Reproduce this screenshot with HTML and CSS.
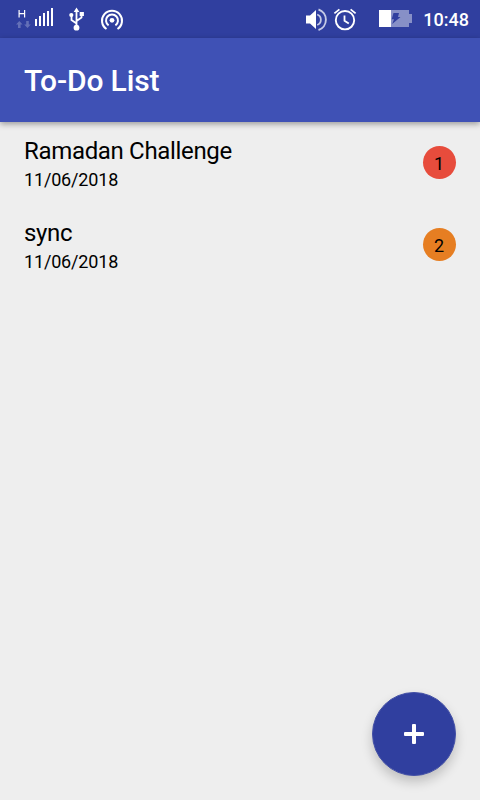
FILE: index.html
```html
<!DOCTYPE html>
<html lang="en">
<head>
<meta charset="utf-8">
<title>To-Do List</title>
<link rel="stylesheet" href="styles.css">
</head>
<body>
<div class="status-bar">
  <div class="status-left">
    <svg class="signal" width="40" height="22" viewBox="0 0 40 22">
      <path class="stroke" stroke-width="1.2" d="M4.1 2v7.4M9.6 2v7.4M4.1 5.6h5.5"/>
      <path class="dim" d="M4.3 13l3.3 3.6H5.6V20H3v-3.4H1zM12.5 20l-3.3-3.6h2V13h2.6v3.4h2z"/>
      <path class="fill" d="M20 11h2v7h-2zM24 8h2v10h-2zM28 5h2v13h-2zM32 3h2v15h-2zM36 0h2v18h-2z"/>
    </svg>
    <svg class="usb" width="18" height="24" viewBox="0 0 18 24">
      <path class="stroke" stroke-width="1.8" d="M8.5 20V4M8.5 16.5l-5-3.5V8M8.5 14l5-3.5V7"/>
      <path class="fill" d="M8.5 .5l2.8 4.5H5.7zM11.7 5h4.2v3.9h-4.2z"/>
      <circle class="fill" cx="3.3" cy="8" r="2.1"/>
      <circle class="fill" cx="8.5" cy="20.7" r="2.9"/>
    </svg>
    <svg class="hotspot" width="24" height="22" viewBox="0 0 24 22">
      <circle class="fill" cx="12" cy="11.3" r="2.4"/>
      <path class="stroke" stroke-width="2" d="M8.6 16.4A6 6 0 1 1 15.4 16.4M6.5 20A10 10 0 1 1 17.5 20"/>
    </svg>
  </div>
  <div class="status-right">
    <svg class="volume" width="22" height="24" viewBox="0 0 22 24">
      <path class="fill" d="M0 7.5h4L10 2v19l-6-5.5H0z"/>
      <path class="stroke soft" stroke-width="1.8" d="M11.2 6.5a5.6 5.6 0 0 1 0 10.5"/>
      <path class="stroke soft" stroke-width="1.9" d="M12.5 1.5a10.8 10.8 0 0 1 0 20.5"/>
    </svg>
    <svg class="alarm" width="24" height="24" viewBox="0 0 24 24">
      <circle class="stroke" stroke-width="1.9" cx="12" cy="12.2" r="9.2"/>
      <path class="stroke" stroke-width="1.8" d="M1.4 5.4l5-4M22.6 5.4l-5-4M11.5 7.5v5.2l4.3 2.8"/>
    </svg>
    <svg class="battery" width="34" height="18" viewBox="0 0 34 18">
      <path class="cell" d="M12 0h18v4h3v9h-3v4H12z"/>
      <path class="fill" d="M0 0h12v17H0z"/>
      <path class="bolt" d="M14.5 3h5.5l-1 4h2.5L13.2 14l1.8-4.8h-2.3z"/>
    </svg>
    <span class="clock">10:48</span>
  </div>
</div>
<header class="app-bar"><h1 class="title">To-Do List</h1></header>
<main class="tasks">
  <div class="task">
    <div class="task-text">
      <div class="task-name">Ramadan Challenge</div>
      <div class="task-date">11/06/2018</div>
    </div>
    <div class="priority high">1</div>
  </div>
  <div class="task">
    <div class="task-text">
      <div class="task-name">sync</div>
      <div class="task-date">11/06/2018</div>
    </div>
    <div class="priority medium">2</div>
  </div>
</main>
<button class="fab" aria-label="Add task">
  <svg width="20" height="20" viewBox="0 0 20 20"><path class="fill" d="M9 0h2q1 0 1 1v7h7q1 0 1 1v2q0 1-1 1h-7v7q0 1-1 1H9q-1 0-1-1v-7H1q-1 0-1-1V9q0-1 1-1h7V1q0-1 1-1z"/></svg>
</button>
</body>
</html>
```
FILE: styles.css
```css
* { box-sizing: border-box; }
body {
  margin: 0;
  height: 800px;
  overflow: hidden;
  background: #eeeeee;
  color: #000;
  font-family: Roboto, "Liberation Sans", sans-serif;
}
.status-bar {
  display: flex;
  justify-content: space-between;
  height: 38px;
  padding: 0 11px 0 15px;
  background: #303f9f;
}
.status-left, .status-right { display: flex; align-items: flex-start; }
.fill { fill: #fff; }
.stroke { fill: none; stroke: #fff; }
.dim { fill: #6470b7; }
.soft { stroke: #c5cae6; }
.cell { fill: #8790c7; }
.bolt { fill: #303f9f; }
.signal { margin-top: 8px; }
.usb { margin: 7px 0 0 13px; }
.hotspot { margin: 9px 0 0 14px; }
.volume { margin-top: 8px; }
.alarm { margin: 8px 0 0 5px; }
.battery { margin: 10px 0 0 22px; }
.clock {
  margin-left: 10px;
  color: #fff;
  font-size: 18px;
  font-weight: 500;
  line-height: 40px;
}
.app-bar {
  display: flex;
  align-items: center;
  height: 84px;
  padding: 2px 24px 0;
  background: #3f51b5;
  box-shadow: 0 2px 6px rgba(0, 0, 0, .36);
}
.title {
  margin: 0;
  color: #fff;
  font-size: 30px;
  font-weight: 500;
  line-height: 36px;
  letter-spacing: -.15px;
}
.task {
  display: flex;
  justify-content: space-between;
  height: 82px;
  padding: 15px 24px 0;
}
.task-name { font-size: 24px; line-height: 28px; letter-spacing: -.33px; }
.task-date { margin-top: 4px; font-size: 18px; line-height: 22px; letter-spacing: -.17px; }
.priority {
  width: 33px;
  height: 33px;
  margin-top: 9px;
  padding-right: 1px;
  border-radius: 50%;
  font-size: 18px;
  line-height: 35px;
  text-align: center;
}
.high { background: #e74c3c; }
.medium { background: #e67e22; }
.fab {
  position: absolute;
  right: 24px;
  bottom: 24px;
  display: flex;
  align-items: center;
  justify-content: center;
  width: 84px;
  height: 84px;
  padding: 0;
  border: 1px solid #4350a6;
  border-radius: 50%;
  background: #303f9f;
  box-shadow: 0 6px 12px rgba(0, 0, 0, .2);
}
```
